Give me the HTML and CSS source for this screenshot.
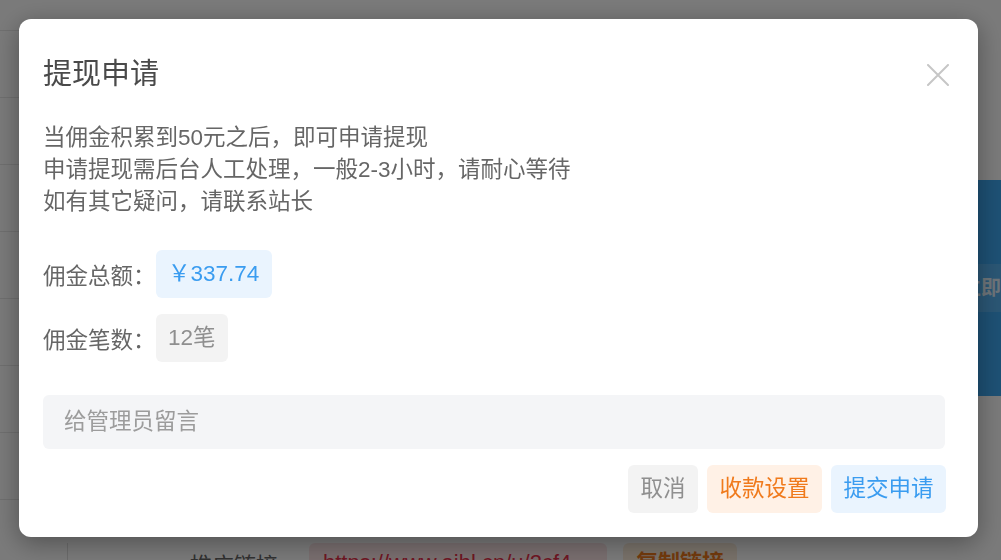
FILE: index.html
```html
<!DOCTYPE html>
<html lang="zh-CN">
<head>
<meta charset="utf-8">
<title>提现申请</title>
<link rel="stylesheet" href="styles.css">
</head>
<body>
<div class="page">
  <aside class="sidebar">
    <div class="side-head"></div>
    <div class="side-item"></div>
    <div class="side-item"></div>
    <div class="side-item"></div>
    <div class="side-item"></div>
    <div class="side-item"></div>
    <div class="side-item"></div>
    <div class="side-item"></div>
    <div class="side-item"></div>
  </aside>
  <main class="main">
    <div class="main-top"></div>
    <div class="banner-row">
      <div class="banner">
        <div class="banner-btn">立即</div>
      </div>
    </div>
    <div class="link-row">
      <span class="link-label">推广链接</span>
      <span class="link-tag">https://www.aibl.cn/u/2cf4</span>
      <span class="copy-tag">复制链接</span>
    </div>
  </main>
</div>

<div class="mask"></div>

<div class="dialog">
  <div class="dialog-header">
    <h2 class="dialog-title">提现申请</h2>
    <span class="dialog-close">
      <svg viewBox="0 0 22 22" width="22" height="22"><path d="M1 1 L21 21 M21 1 L1 21" stroke="#c6c6c6" stroke-width="2" stroke-linecap="round" fill="none"/></svg>
    </span>
  </div>
  <div class="dialog-desc">
    <p>当佣金积累到50元之后，即可申请提现</p>
    <p>申请提现需后台人工处理，一般2-3小时，请耐心等待</p>
    <p>如有其它疑问，请联系站长</p>
  </div>
  <div class="info">
    <div class="info-row">
      <span class="info-label">佣金总额：</span>
      <span class="tag tag-blue">￥337.74</span>
    </div>
    <div class="info-row">
      <span class="info-label">佣金笔数：</span>
      <span class="tag tag-gray">12笔</span>
    </div>
  </div>
  <div class="message">给管理员留言</div>
  <div class="actions">
    <span class="btn btn-gray">取消</span>
    <span class="btn btn-orange">收款设置</span>
    <span class="btn btn-blue">提交申请</span>
  </div>
</div>
</body>
</html>
```

FILE: styles.css
```css
html, body {
  margin: 0;
  padding: 0;
  width: 100%;
  height: 100%;
  overflow: hidden;
  background: #ffffff;
  font-family: "Liberation Sans", "Noto Sans CJK SC", sans-serif;
}

.page {
  display: flex;
  height: 100vh;
}

.sidebar {
  width: 68px;
  flex: none;
  display: flex;
  flex-direction: column;
}

.side-head {
  flex: none;
  height: 30px;
  border-bottom: 1px solid #e8e8e8;
}

.side-item {
  flex: none;
  height: 66px;
  border-bottom: 1px solid #e8e8e8;
}

.main {
  flex: 1;
  display: flex;
  flex-direction: column;
  min-width: 0;
}

.main-top {
  flex: none;
  height: 180px;
}

.banner-row {
  flex: none;
  display: flex;
  justify-content: flex-end;
  height: 216px;
}

.banner {
  width: 420px;
  height: 216px;
  background: #3ea8f2;
  display: flex;
  align-items: center;
  justify-content: flex-end;
  overflow: hidden;
}

.banner-btn {
  height: 48px;
  padding-left: 20px;
  background: rgba(255, 255, 255, 0.14);
  color: rgba(255, 255, 255, 0.85);
  font-size: 20px;
  font-weight: bold;
  line-height: 48px;
  white-space: nowrap;
}

.link-row {
  flex: none;
  display: flex;
  align-items: center;
  margin-top: 147px;
  padding-left: 122px;
  border-left: 1px solid #e0e0e0;
  margin-left: -1px;
}

.link-label {
  font-size: 22px;
  color: #666;
  margin-right: 31px;
}

.link-tag {
  width: 298px;
  height: 40px;
  box-sizing: border-box;
  padding: 0 14px;
  line-height: 40px;
  background: #fde6e8;
  color: #e8304a;
  font-size: 22px;
  border-radius: 6px;
  white-space: nowrap;
  overflow: hidden;
  margin-right: 16px;
}

.copy-tag {
  height: 40px;
  line-height: 40px;
  padding: 0 13px;
  background: #fdeedd;
  color: #f07a1c;
  font-size: 22px;
  font-weight: bold;
  border-radius: 6px;
}

.mask {
  position: fixed;
  inset: 0;
  background: rgba(0, 0, 0, 0.52);
}

.dialog {
  position: fixed;
  left: 19px;
  top: 19px;
  width: 959px;
  box-sizing: border-box;
  padding: 35px 32px 24px 24px;
  background: #ffffff;
  border-radius: 12px;
  box-shadow: 0 6px 26px rgba(0, 0, 0, 0.35);
}

.dialog-header {
  display: flex;
  align-items: center;
  justify-content: space-between;
  height: 40px;
}

.dialog-title {
  margin: 0;
  font-size: 29px;
  font-weight: normal;
  line-height: 40px;
  color: #4a4a4a;
}

.dialog-close {
  display: flex;
  margin-right: -3px;
  margin-top: 2px;
}

.dialog-desc {
  margin-top: 28px;
  font-size: 22.5px;
  line-height: 32px;
  color: #666666;
}

.dialog-desc p {
  margin: 0;
}

.info {
  margin-top: 32px;
  display: flex;
  flex-direction: column;
  gap: 16px;
}

.info-row {
  display: flex;
  align-items: center;
}

.info-label {
  font-size: 22.5px;
  color: #666666;
}

.tag {
  height: 48px;
  line-height: 48px;
  padding: 0 12.5px;
  font-size: 22.5px;
  border-radius: 6px;
}

.tag-blue {
  background: #eaf4fe;
  color: #3a9cf0;
}

.tag-gray {
  background: #f3f3f3;
  color: #8f8f8f;
}

.message {
  margin-top: 33px;
  height: 54px;
  line-height: 54px;
  padding-left: 21px;
  margin-right: 1px;
  background: #f4f5f7;
  border-radius: 6px;
  font-size: 22.5px;
  color: #9c9c9c;
}

.actions {
  margin-top: 16px;
  display: flex;
  justify-content: flex-end;
  gap: 9px;
}

.btn {
  height: 48px;
  line-height: 48px;
  padding: 0 12.5px;
  font-size: 22.5px;
  border-radius: 6px;
}

.btn-gray {
  background: #f3f3f3;
  color: #8f8f8f;
}

.btn-orange {
  background: #fff1e6;
  color: #f07a1c;
}

.btn-blue {
  background: #eaf4fe;
  color: #3a9cf0;
}
```
